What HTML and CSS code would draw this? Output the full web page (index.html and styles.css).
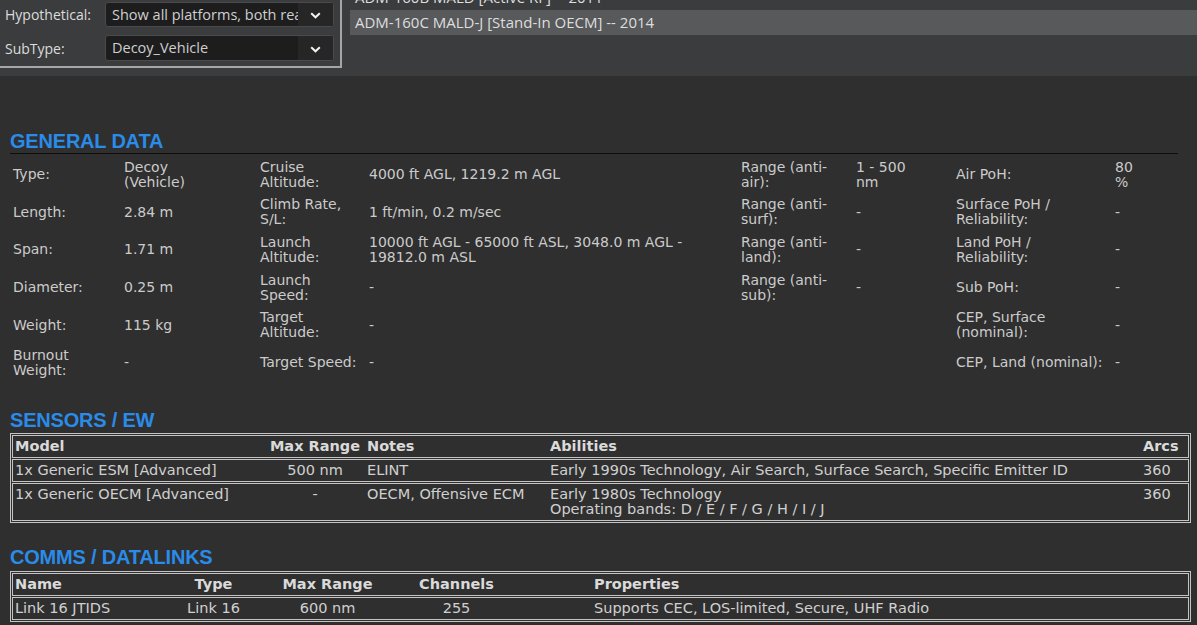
FILE: index.html
```html
<!DOCTYPE html>
<html lang="en">
<head>
<meta charset="utf-8">
<title>ADM-160C MALD-J</title>
<link rel="stylesheet" href="styles.css">
</head>
<body>
<header class="top">
  <div class="filters">
    <div class="frow">
      <span class="flabel">Hypothetical:</span>
      <div class="select">
        <span class="sval">Show all platforms, both real and hypothetical</span>
        <span class="sbtn"><svg width="11" height="7" viewBox="0 0 11 7"><path d="M1.2 1.2 L5.5 5.3 L9.8 1.2" fill="none" stroke="#f2f2f2" stroke-width="2"/></svg></span>
      </div>
    </div>
    <div class="frow">
      <span class="flabel">SubType:</span>
      <div class="select">
        <span class="sval">Decoy_Vehicle</span>
        <span class="sbtn"><svg width="11" height="7" viewBox="0 0 11 7"><path d="M1.2 1.2 L5.5 5.3 L9.8 1.2" fill="none" stroke="#f2f2f2" stroke-width="2"/></svg></span>
      </div>
    </div>
  </div>
  <div class="list">
    <ul class="items">
      <li>ADM-160B MALD [Active RF] -- 2011</li>
      <li class="sel">ADM-160C MALD-J [Stand-In OECM] -- 2014</li>
    </ul>
  </div>
</header>

<main class="content">
  <h2 class="sec sec-line">GENERAL DATA</h2>
  <table class="gen">
    <colgroup>
      <col class="c1"><col class="c2"><col class="c3"><col class="c4"><col class="c5"><col class="c6"><col class="c7"><col class="c8">
    </colgroup>
    <tr>
      <td>Type:</td><td>Decoy<br>(Vehicle)</td>
      <td>Cruise<br>Altitude:</td><td>4000 ft AGL, 1219.2 m AGL</td>
      <td>Range (anti-<br>air):</td><td>1 - 500<br>nm</td>
      <td>Air PoH:</td><td>80<br>%</td>
    </tr>
    <tr>
      <td>Length:</td><td>2.84 m</td>
      <td>Climb Rate,<br>S/L:</td><td>1 ft/min, 0.2 m/sec</td>
      <td>Range (anti-<br>surf):</td><td>-</td>
      <td>Surface PoH /<br>Reliability:</td><td>-</td>
    </tr>
    <tr>
      <td>Span:</td><td>1.71 m</td>
      <td>Launch<br>Altitude:</td><td>10000 ft AGL - 65000 ft ASL, 3048.0 m AGL -<br>19812.0 m ASL</td>
      <td>Range (anti-<br>land):</td><td>-</td>
      <td>Land PoH /<br>Reliability:</td><td>-</td>
    </tr>
    <tr>
      <td>Diameter:</td><td>0.25 m</td>
      <td>Launch<br>Speed:</td><td>-</td>
      <td>Range (anti-<br>sub):</td><td>-</td>
      <td>Sub PoH:</td><td>-</td>
    </tr>
    <tr>
      <td>Weight:</td><td>115 kg</td>
      <td>Target<br>Altitude:</td><td>-</td>
      <td></td><td></td>
      <td>CEP, Surface<br>(nominal):</td><td>-</td>
    </tr>
    <tr>
      <td>Burnout<br>Weight:</td><td>-</td>
      <td>Target Speed:</td><td>-</td>
      <td></td><td></td>
      <td>CEP, Land (nominal):</td><td>-</td>
    </tr>
  </table>

  <h2 class="sec">SENSORS / EW</h2>
  <table class="grid sensors">
    <colgroup>
      <col class="s1"><col class="s2"><col class="s3"><col class="s4"><col class="s5">
    </colgroup>
    <tr>
      <th class="l">Model</th><th class="c">Max Range</th><th class="l">Notes</th><th class="l">Abilities</th><th class="l">Arcs</th>
    </tr>
    <tr>
      <td>1x Generic ESM [Advanced]</td><td class="c">500 nm</td><td>ELINT</td><td>Early 1990s Technology, Air Search, Surface Search, Specific Emitter ID</td><td>360</td>
    </tr>
    <tr>
      <td>1x Generic OECM [Advanced]</td><td class="c">-</td><td>OECM, Offensive ECM</td><td>Early 1980s Technology<br>Operating bands: D / E / F / G / H / I / J</td><td>360</td>
    </tr>
  </table>

  <h2 class="sec sec-comms">COMMS / DATALINKS</h2>
  <table class="grid comms">
    <colgroup>
      <col class="m1"><col class="m2"><col class="m3"><col class="m4"><col class="m5">
    </colgroup>
    <tr>
      <th class="l">Name</th><th class="c">Type</th><th class="c">Max Range</th><th class="c">Channels</th><th class="l props">Properties</th>
    </tr>
    <tr>
      <td>Link 16 JTIDS</td><td class="c">Link 16</td><td class="c">600 nm</td><td class="c">255</td><td class="props">Supports CEC, LOS-limited, Secure, UHF Radio</td>
    </tr>
  </table>
</main>
</body>
</html>
```

FILE: styles.css
```css
html, body {
  margin: 0;
  padding: 0;
  background: #2f2f2f;
  height: 100%;
  overflow: hidden;
}

body {
  font-family: "DejaVu Sans", Verdana, sans-serif;
  color: #cbcbcb;
}

/* ---------- top filter panel ---------- */
.top {
  display: flex;
  height: 76px;
  background: #3b3c3e;
  font-family: "Open Sans", "Noto Sans", sans-serif;
  font-size: 14px;
  color: #dcdcdc;
}

.filters {
  box-sizing: border-box;
  width: 342px;
  height: 68px;
  padding: 2px 6px 0 5px;
  border-right: 2px solid #a6a6a6;
  border-bottom: 2px solid #a6a6a6;
  display: flex;
  flex-direction: column;
  gap: 8px;
}

.frow {
  display: flex;
  align-items: center;
  height: 25px;
}

.frow + .frow {
  height: 26px;
}

.flabel {
  width: 100px;
  flex: none;
  white-space: nowrap;
}

.select {
  flex: 1;
  height: 100%;
  box-sizing: border-box;
  display: flex;
  align-items: stretch;
  background: #1d1d1e;
  border: 1px solid #4a4a4c;
  border-radius: 3px;
  overflow: hidden;
}

.sval {
  flex: 1;
  min-width: 0;
  overflow: hidden;
  white-space: nowrap;
  padding-left: 6px;
  line-height: 23px;
  font-size: 14.5px;
  color: #cfcfcf;
}

.sbtn {
  width: 35px;
  flex: none;
  background: #262627;
  display: flex;
  align-items: center;
  justify-content: center;
  padding-top: 2px;
  box-sizing: border-box;
}

.list {
  flex: 1;
  margin-left: 8px;
  overflow: hidden;
}

.items {
  list-style: none;
  margin: -15px 0 0 0;
  padding: 0;
  font-size: 15px;
}

.items li {
  height: 25px;
  line-height: 25px;
  padding-left: 5px;
  white-space: nowrap;
  color: #dedede;
}

.items li.sel {
  background: #58595b;
}

/* ---------- content ---------- */
.content {
  padding: 0 6px 0 10px;
}

.sec {
  margin: 27px 0 1px 0;
  font-family: "Liberation Sans", Arial, sans-serif;
  font-weight: bold;
  font-size: 20px;
  line-height: 23px;
  letter-spacing: -0.2px;
  color: #2a8be8;
}

.sec-line {
  margin-top: 54px;
  margin-bottom: 2px;
  width: 1168px;
  border-bottom: 1px solid #0e0e0e;
}

.sec-comms {
  margin-top: 23px;
  margin-bottom: 2px;
}

/* general data table */
.gen {
  width: 1168px;
  table-layout: fixed;
  border-collapse: collapse;
  font-size: 14px;
  line-height: 15px;
}

.gen td {
  padding: 3.8px 3px;
  height: 30px;
  vertical-align: middle;
  white-space: nowrap;
  overflow: visible;
}

.gen .c1 { width: 111px; }
.gen .c2 { width: 136px; }
.gen .c3 { width: 109px; }
.gen .c4 { width: 372px; }
.gen .c5 { width: 115px; }
.gen .c6 { width: 100px; }
.gen .c7 { width: 159px; }
.gen .c8 { width: 66px; }

/* bordered grids */
.grid {
  width: 1181px;
  table-layout: fixed;
  border-collapse: separate;
  border-spacing: 0 1px;
  padding: 0 1px;
  border: 1px solid #c4c4c4;
  font-size: 14.5px;
  line-height: 15px;
  color: #d0d0d0;
}

.grid th,
.grid td {
  padding: 3px 3px;
  border-top: 1px solid #c4c4c4;
  border-bottom: 1px solid #c4c4c4;
  vertical-align: top;
  white-space: nowrap;
  text-align: left;
}

.grid th {
  font-weight: bold;
  color: #dadada;
}

.grid th:first-child,
.grid td:first-child {
  border-left: 1px solid #c4c4c4;
  padding-left: 2px;
}

.grid th:last-child,
.grid td:last-child {
  border-right: 1px solid #c4c4c4;
}

.grid .c { text-align: center; }
.grid .l { text-align: left; }

.sensors .s1 { width: 254px; }
.sensors .s2 { width: 98px; }
.sensors .s3 { width: 183px; }
.sensors .s4 { width: 593px; }
.sensors .s5 { width: 49px; }

.comms .m1 { width: 154px; }
.comms .m2 { width: 95px; }
.comms .m3 { width: 133px; }
.comms .m4 { width: 125px; }
.comms .m5 { width: 670px; }

.comms .props {
  padding-left: 75px;
}
```
